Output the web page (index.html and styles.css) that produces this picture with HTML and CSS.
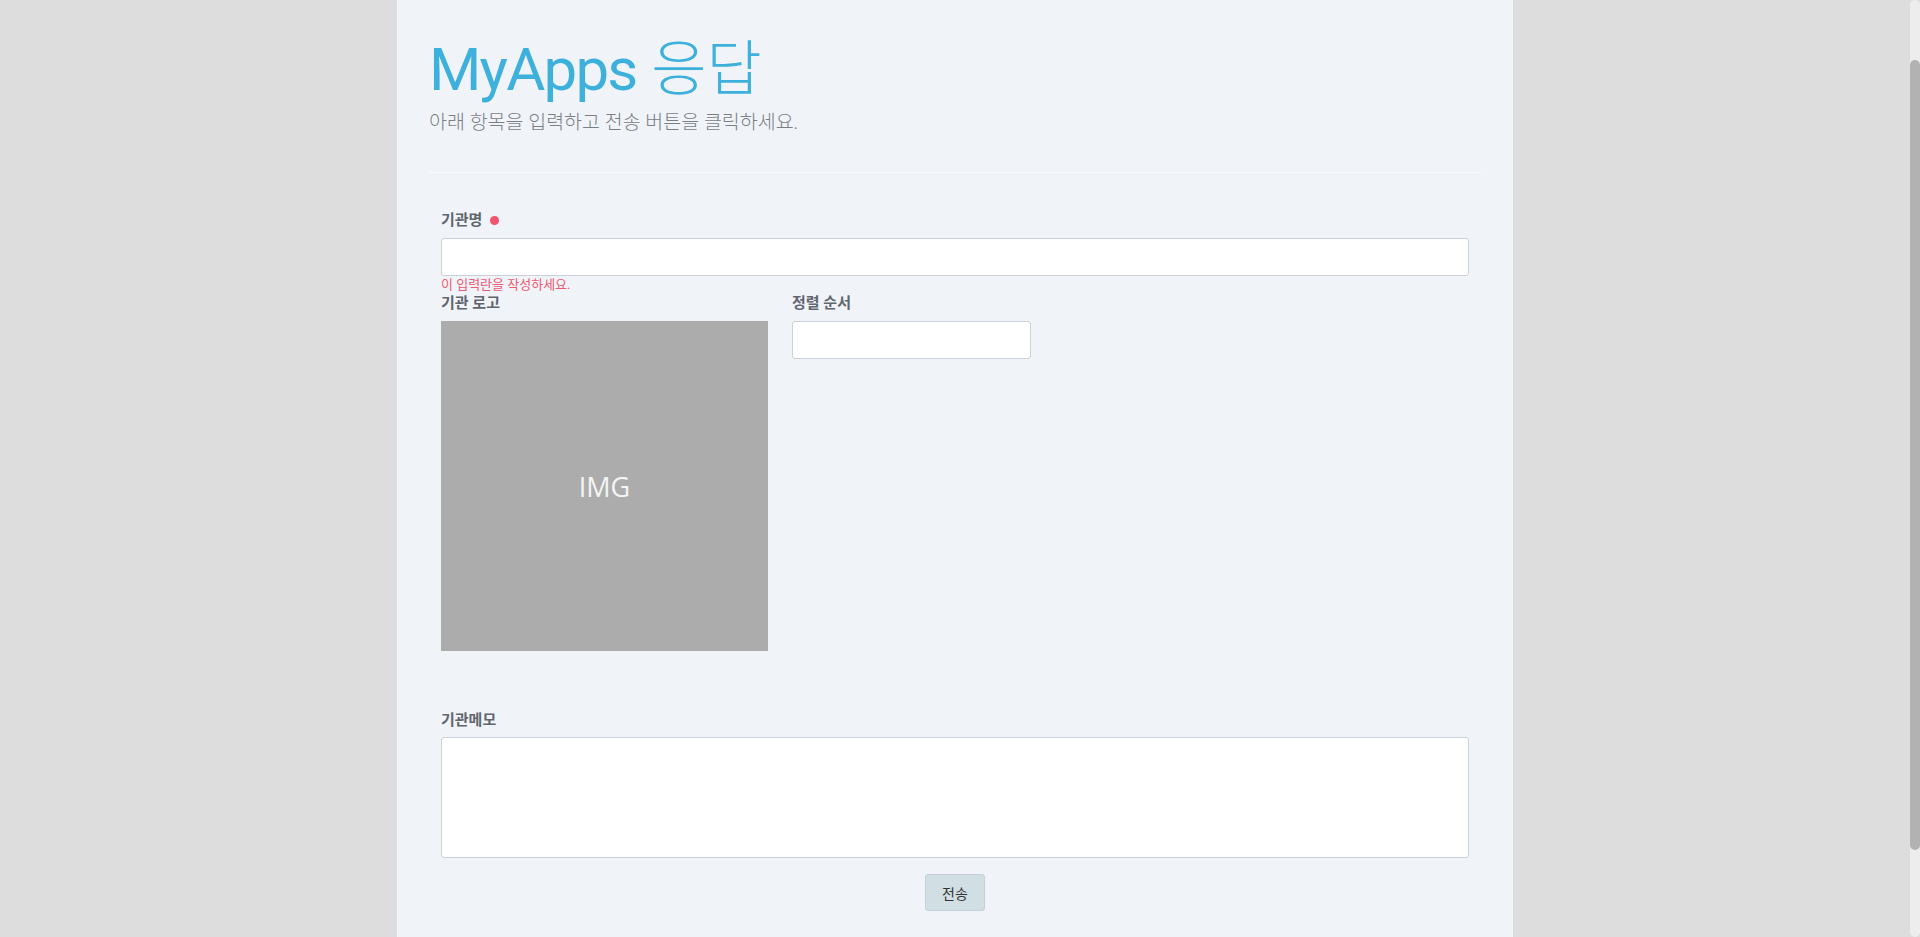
FILE: index.html
```html
<!DOCTYPE html>
<html lang="ko">
<head>
<meta charset="utf-8">
<title>MyApps 응답</title>
<link rel="stylesheet" href="styles.css">
</head>
<body>
<main class="page">
  <header class="header">
    <h1 class="title"><span class="title-en">MyApps</span> <span class="title-ko">응답</span></h1>
    <p class="subtitle">아래 항목을 입력하고 전송 버튼을 클릭하세요.</p>
  </header>
  <form class="form">
    <div class="field">
      <label class="label">기관명 <span class="required"></span></label>
      <input class="input" type="text">
      <div class="error">이 입력란을 작성하세요.</div>
    </div>
    <div class="row">
      <div class="field logo-field">
        <label class="label">기관 로고</label>
        <div class="img-box">IMG</div>
      </div>
      <div class="field sort-field">
        <label class="label">정렬 순서</label>
        <input class="input" type="text">
      </div>
    </div>
    <div class="field memo-field">
      <label class="label">기관메모</label>
      <textarea class="textarea"></textarea>
    </div>
    <div class="actions">
      <button class="button" type="button">전송</button>
    </div>
  </form>
</main>
<div class="scrollbar" aria-hidden="true"><div class="scrollbar-thumb"></div></div>
</body>
</html>
```

FILE: styles.css
```css
html {
  background: #dddddd;
  scrollbar-width: none;
}
html::-webkit-scrollbar {
  display: none;
}
body {
  margin: 0;
  padding-right: 10px;
  background: #dddddd;
  font-family: Roboto, "Noto Sans CJK KR", sans-serif;
}
.page {
  width: 1116px;
  margin: 0 auto;
  background: #f0f4f8;
  padding: 34px 32px 200px;
  box-sizing: border-box;
}
.header {
  padding-bottom: 37px;
  border-bottom: 1px solid #f8fafc;
}
.title {
  margin: 0;
  font-size: 60px;
  line-height: 72px;
  font-weight: 400;
  color: #3db0dc;
}
.title-en {
  letter-spacing: -1.8px;
}
.title-ko {
  font-weight: 300;
}
.subtitle {
  margin: 5px 0 0;
  font-size: 19.5px;
  line-height: 24px;
  font-weight: 300;
  color: #7a7e85;
}
.form {
  padding: 37px 12px 0;
}
.field {
  display: flex;
  flex-direction: column;
}
.label {
  display: flex;
  align-items: center;
  gap: 8px;
  font-size: 15px;
  line-height: 20px;
  font-weight: 700;
  color: #60656e;
  margin-bottom: 8px;
}
.required {
  width: 9px;
  height: 9px;
  border-radius: 50%;
  background: #f2536e;
}
.input {
  height: 38px;
  box-sizing: border-box;
  border: 1px solid #cdd1d7;
  border-radius: 3px;
  background: #ffffff;
  padding: 0 10px;
  font: inherit;
}
.error {
  margin-top: 1px;
  font-size: 13px;
  line-height: 16px;
  color: #ee5a72;
}
.row {
  display: flex;
  gap: 24px;
}
.logo-field {
  width: 327px;
}
.img-box {
  height: 330px;
  background: #acacac;
  color: #f4f4f4;
  font-family: "Open Sans", sans-serif;
  font-size: 27px;
  display: flex;
  align-items: center;
  justify-content: center;
}
.sort-field {
  width: 239px;
}
.memo-field {
  margin-top: 59px;
}
.memo-field .label {
  margin-bottom: 7px;
}
.textarea {
  height: 121px;
  box-sizing: border-box;
  border: 1px solid #cdd1d7;
  border-radius: 3px;
  background: #ffffff;
  resize: none;
  font: inherit;
}
.actions {
  display: flex;
  justify-content: center;
  margin-top: 16px;
}
.button {
  width: 60px;
  height: 37px;
  border: 1px solid #c3d2da;
  border-radius: 3px;
  background: #d1dee4;
  color: #333333;
  font-family: Roboto, "Noto Sans CJK KR", sans-serif;
  font-size: 14px;
  padding: 0;
}
.scrollbar {
  position: fixed;
  top: 0;
  right: 0;
  width: 10px;
  height: 100%;
  background: #ededed;
  border-radius: 5px;
}
.scrollbar-thumb {
  margin-top: 60px;
  height: 790px;
  background: #b2b2b2;
  border-radius: 5px;
}
```
